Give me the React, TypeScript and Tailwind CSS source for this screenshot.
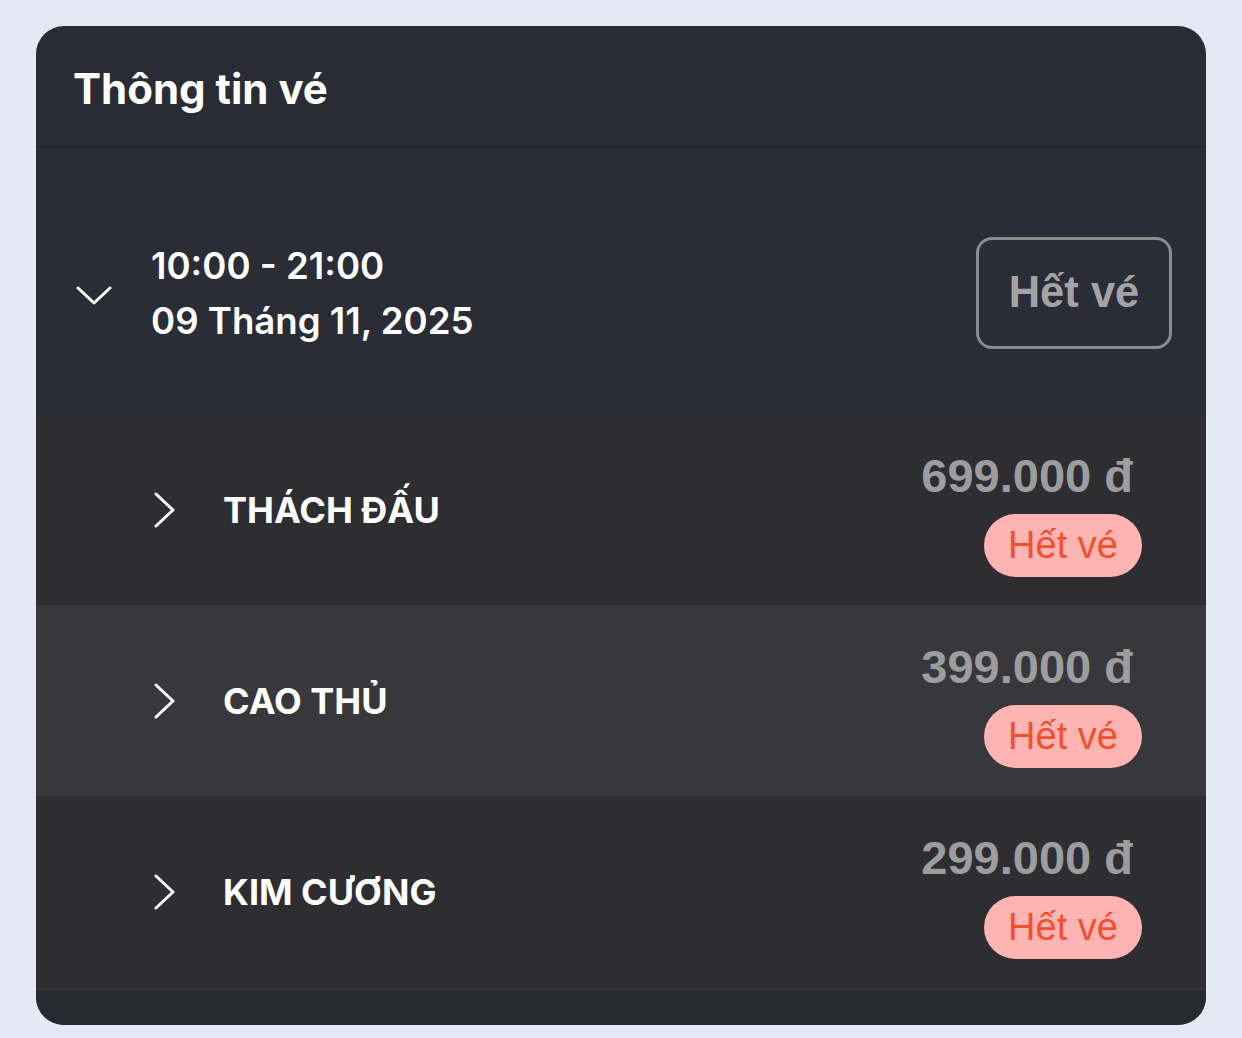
import React from "react";

const tiers = [
  { name: "THÁCH ĐẤU", price: "699.000 đ", bg: "bg-[#2e2e32]" },
  { name: "CAO THỦ", price: "399.000 đ", bg: "bg-[#38383c]" },
  { name: "KIM CƯƠNG", price: "299.000 đ", bg: "bg-[#2e2e32]" },
];

function ChevronDown() {
  return (
    <svg width="36" height="20" viewBox="0 0 36 20" fill="none">
      <path d="M2 3 L18 18 L34 3" stroke="white" strokeWidth="3" strokeLinecap="round" strokeLinejoin="round" />
    </svg>
  );
}

function ChevronRight() {
  return (
    <svg width="24" height="36" viewBox="0 0 24 36" fill="none">
      <path d="M3 2 L20 18 L3 34" stroke="white" strokeWidth="3" strokeLinecap="round" strokeLinejoin="round" />
    </svg>
  );
}

export default function App() {
  return (
    <div className="min-h-[1038px] w-[1242px] bg-[#e5e9f4] pt-[26px] pl-[36px] font-['Inter',sans-serif]">
      <div className="w-[1170px] overflow-hidden rounded-[28px] bg-[#292c34]">
        {/* header */}
        <div className="flex h-[122px] items-center border-b-[3px] border-[#24272d] pl-[37px] pt-[7px]">
          <h1 className="text-[42px] font-bold leading-none text-white">Thông tin vé</h1>
        </div>

        {/* date */}
        <div className="flex h-[266px] items-center justify-between bg-[#2a2d35] pt-[25px] pr-[34px] pl-[40px]">
          <div className="flex items-center">
            <div className="mt-[2px] w-[75px]">
              <ChevronDown />
            </div>
            <div className="flex flex-col text-[36.6px] font-semibold leading-[55px] text-white">
              <span>10:00 - 21:00</span>
              <span>09 Tháng 11, 2025</span>
            </div>
          </div>
          <div className="mt-[-2px] flex h-[112px] w-[196px] items-center justify-center rounded-[16px] border-[3px] border-[#8c8c90] font-['Liberation_Sans',sans-serif] text-[43.5px] font-bold text-[#a3a3a5]">
            Hết vé
          </div>
        </div>

        {/* tiers */}
        {tiers.map((t) => (
          <div key={t.name} className={`flex h-[191px] items-center justify-between pr-[64px] pl-[117px] ${t.bg}`}>
            <div className="flex items-center">
              <div className="w-[70px]">
                <ChevronRight />
              </div>
              <span className="text-[36px] font-bold text-white">{t.name}</span>
            </div>
            <div className="mt-[8px] flex flex-col items-end">
              <span className="pr-[9px] font-['Liberation_Sans',sans-serif] text-[47px] leading-[50px] font-bold text-[#9d9d9f]">
                {t.price}
              </span>
              <span className="mt-[13px] flex h-[63px] w-[158px] items-center justify-center rounded-full bg-[#ffb4b4] font-['Liberation_Sans',sans-serif] text-[38px] text-[#f2502c]">
                Hết vé
              </span>
            </div>
          </div>
        ))}

        <div className="h-[38px] border-t-[4px] border-[#323236] bg-[#272a31]" />
      </div>
    </div>
  );
}
